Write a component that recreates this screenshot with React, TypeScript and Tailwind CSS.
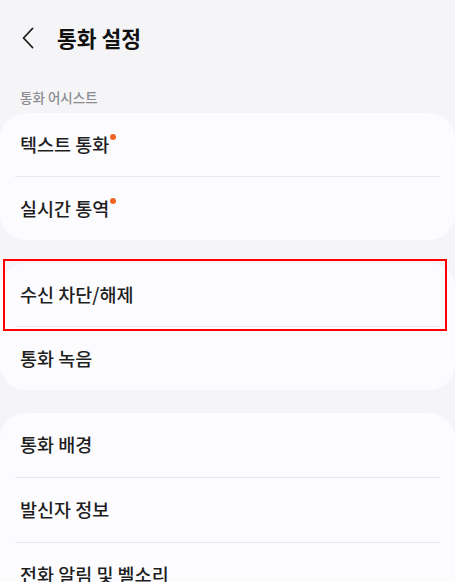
import { Fragment } from "react";

interface Row {
  readonly label: string;
  readonly dot?: boolean;
  readonly marked?: boolean;
}

const groups: { readonly title?: string; readonly tall?: boolean; readonly rows: Row[] }[] = [
  {
    title: "통화 어시스트",
    rows: [
      { label: "텍스트 통화", dot: true },
      { label: "실시간 통역", dot: true },
    ],
  },
  {
    rows: [{ label: "수신 차단/해제", marked: true }, { label: "통화 녹음" }],
  },
  {
    tall: true,
    rows: [
      { label: "통화 배경" },
      { label: "발신자 정보" },
      { label: "전화 알림 및 벨소리" },
    ],
  },
];

function ChevronLeft() {
  return (
    <svg width="14" height="22" viewBox="0 0 14 22" fill="none" aria-hidden>
      <path
        d="M11.5 1.5 L2.5 11 L11.5 20.5"
        stroke="#1a1a1a"
        strokeWidth="1.8"
        strokeLinecap="round"
        strokeLinejoin="round"
      />
    </svg>
  );
}

function SettingRow({ label, dot, marked, tall }: Row & { readonly tall?: boolean }) {
  return (
    <div
      className={
        tall
          ? "relative flex h-[64px] items-center px-5"
          : "relative flex h-[63px] items-center px-5"
      }
    >
      <span className="relative text-[18.5px] font-medium text-[#1e1e1e]">
        {label}
        {dot ? (
          <span className="absolute -right-[7px] top-[3px] h-[6px] w-[6px] rounded-full bg-[#ef6420]" />
        ) : null}
      </span>
      {marked ? (
        <div className="pointer-events-none absolute -top-[4px] left-[3px] right-[8px] h-[72px] border-2 border-[#ff0000]" />
      ) : null}
    </div>
  );
}

export default function App() {
  return (
    <div
      className="h-[582px] w-[455px] overflow-hidden bg-[#f5f5f7]"
      style={{ fontFamily: '"Noto Sans CJK KR", "Noto Sans", sans-serif' }}
    >
      <header className="flex h-[76px] items-center pl-[21px]">
        <ChevronLeft />
        <h1 className="ml-[22px] text-[21.5px] font-bold text-[#111]">통화 설정</h1>
      </header>

      <div className="flex flex-col gap-[23px]">
        {groups.map((group, gi) => (
          <section key={gi}>
            {group.title ? (
              <h2 className="flex h-[37px] items-center px-5 pt-[5px] text-[13.5px] font-medium text-[#8c8c90]">
                {group.title}
              </h2>
            ) : null}
            <div className="rounded-[26px] bg-[#fcfcfe]">
              {group.rows.map((row, ri) => (
                <Fragment key={row.label}>
                  {ri > 0 ? <div className="mx-[15px] h-px bg-[#e8e8ea]" /> : null}
                  <SettingRow {...row} tall={group.tall} />
                </Fragment>
              ))}
            </div>
          </section>
        ))}
      </div>
    </div>
  );
}
